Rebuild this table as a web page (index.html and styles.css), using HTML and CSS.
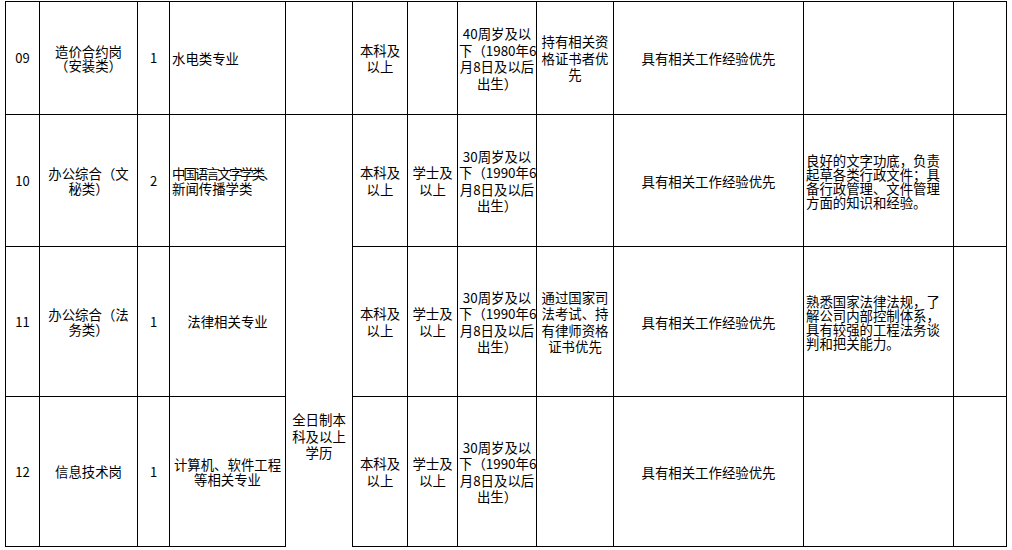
FILE: index.html
```html
<!DOCTYPE html>
<html lang="zh-CN">
<head>
<meta charset="utf-8">
<title>岗位表</title>
<link rel="stylesheet" href="styles.css">
</head>
<body>
<table class="jobs">
  <colgroup>
    <col class="w1"><col class="w2"><col class="w3"><col class="w4">
    <col class="w5"><col class="w6"><col class="w7"><col class="w8">
    <col class="w9"><col class="w10"><col class="w11"><col class="w12">
  </colgroup>
  <tbody>
    <tr class="r09">
      <td class="no">09</td>
      <td class="name">造价合约岗<br>（安装类）</td>
      <td class="no">1</td>
      <td class="major left">水电类专业</td>
      <td></td>
      <td class="mid">本科及<br>以上</td>
      <td class="mid"></td>
      <td class="mid">40周岁及以<br>下（1980年6<br>月8日及以后<br>出生）</td>
      <td class="mid">持有相关资<br>格证书者优<br>先</td>
      <td class="exp">具有相关工作经验优先</td>
      <td class="req"></td>
      <td></td>
    </tr>
    <tr class="r10">
      <td class="no">10</td>
      <td class="name">办公综合（文<br>秘类）</td>
      <td class="no">2</td>
      <td class="major left"><span class="tight">中国语言文字学类、</span><br>新闻传播学类</td>
      <td class="merged" rowspan="3">全日制本<br>科及以上<br>学历</td>
      <td class="mid">本科及<br>以上</td>
      <td class="mid">学士及<br>以上</td>
      <td class="mid">30周岁及以<br>下（1990年6<br>月8日及以后<br>出生）</td>
      <td class="mid"></td>
      <td class="exp">具有相关工作经验优先</td>
      <td class="req">良好的文字功底，负责<br>起草各类行政文件；具<br>备行政管理、文件管理<br>方面的知识和经验。</td>
      <td></td>
    </tr>
    <tr class="r11">
      <td class="no">11</td>
      <td class="name">办公综合（法<br>务类）</td>
      <td class="no">1</td>
      <td class="major">法律相关专业</td>
      <td class="mid">本科及<br>以上</td>
      <td class="mid">学士及<br>以上</td>
      <td class="mid">30周岁及以<br>下（1990年6<br>月8日及以后<br>出生）</td>
      <td class="mid">通过国家司<br>法考试、持<br>有律师资格<br>证书优先</td>
      <td class="exp">具有相关工作经验优先</td>
      <td class="req">熟悉国家法律法规，了<br>解公司内部控制体系，<br>具有较强的工程法务谈<br>判和把关能力。</td>
      <td></td>
    </tr>
    <tr class="r12">
      <td class="no">12</td>
      <td class="name">信息技术岗</td>
      <td class="no">1</td>
      <td class="major">计算机、软件工程<br>等相关专业</td>
      <td class="mid">本科及<br>以上</td>
      <td class="mid">学士及<br>以上</td>
      <td class="mid">30周岁及以<br>下（1990年6<br>月8日及以后<br>出生）</td>
      <td class="mid"></td>
      <td class="exp">具有相关工作经验优先</td>
      <td class="req"></td>
      <td></td>
    </tr>
  </tbody>
</table>
</body>
</html>
```

FILE: styles.css
```css
html, body {
  margin: 0;
  padding: 0;
  background: #ffffff;
}

body {
  font-family: "Noto Sans CJK SC", "Noto Sans", sans-serif;
  font-size: 13.4px;
  color: #000000;
}

.jobs {
  border-collapse: collapse;
  table-layout: fixed;
  width: 1001px;
  margin: 1px 0 0 5px;
}

.w1 { width: 34px; }
.w2 { width: 98px; }
.w3 { width: 32px; }
.w4 { width: 116px; }
.w5 { width: 67px; }
.w6 { width: 55px; }
.w7 { width: 50px; }
.w8 { width: 79px; }
.w9 { width: 77px; }
.w10 { width: 190px; }
.w11 { width: 150px; }
.w12 { width: 53px; }

.jobs td {
  border: 1px solid #000000;
  padding: 0 1px;
  text-align: center;
  vertical-align: middle;
  white-space: nowrap;
  line-height: 14px;
  overflow: hidden;
}

.r09 { height: 113px; }
.r10 { height: 132px; }
.r11 { height: 150px; }
.r12 { height: 150px; }

.jobs td.no {
  font-size: 13px;
}

.jobs td.name {
  line-height: 14.5px;
}

.jobs td.major {
  line-height: 14.5px;
}

.jobs td.left {
  text-align: left;
  padding-left: 2px;
}

.tight {
  letter-spacing: -2px;
}

.jobs td.mid {
  line-height: 16.5px;
}

.jobs td.merged {
  vertical-align: top;
  padding-top: 296px;
  line-height: 16.5px;
  border-bottom: none;
}

.jobs td.req {
  text-align: left;
  padding-left: 2px;
  line-height: 14px;
}
```
